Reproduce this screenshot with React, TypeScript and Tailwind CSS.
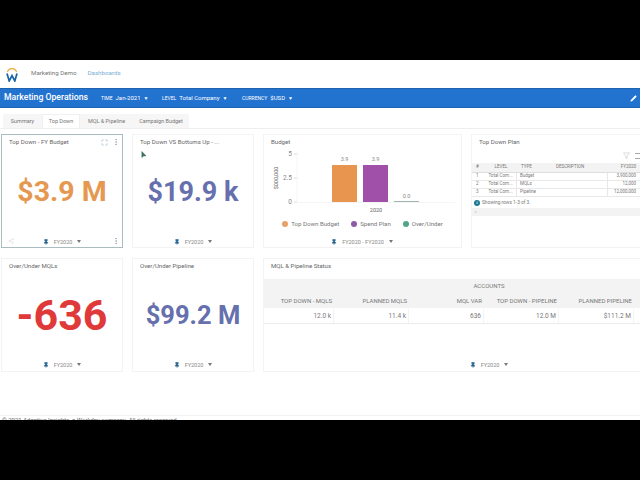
import { EllipsisVertical, Maximize, Pencil, Filter, Pin, Share2 } from "lucide-react";
import type { ReactNode } from "react";

const tabs = ["Summary", "Top Down", "MQL & Pipeline", "Campaign Budget"];

const planRows = [
  ["1", "Total Com...", "Budget", "3,900,000"],
  ["2", "Total Com...", "MQLs", "12,000"],
  ["3", "Total Com...", "Pipeline", "12,000,000"],
];

const statusCols = [
  ["TOP DOWN - MQLS", "12.0 k", "w-[70px]"],
  ["PLANNED MQLS", "11.4 k", "w-[75px]"],
  ["MQL VAR", "636", "w-[75px]"],
  ["TOP DOWN - PIPELINE", "12.0 M", "w-[75px]"],
  ["PLANNED PIPELINE", "$111.2 M", "w-[75px]"],
];

const Caret = () => (
  <span className="inline-block w-0 h-0 border-x-[2.5px] border-x-transparent border-t-[3px] border-t-[#777]" />
);

const PeriodFilter = ({ label = "FY2020" }: { label?: string }) => (
  <div className="flex items-center justify-center gap-[5px] text-[5.5px] text-[#888]">
    <Pin size={6} className="text-[#1f5f8b] fill-[#1f5f8b]" />
    <span>{label}</span>
    <Caret />
  </div>
);

type CardProps = {
  title: string;
  children: ReactNode;
  className?: string;
};

const Card = ({ title, children, className = "border-[#f3f3f3]" }: CardProps) => (
  <div className={`relative flex flex-col border bg-white h-full overflow-hidden ${className}`}>
    <div className="pl-[7px] pt-[2px] text-[6.1px] leading-[9px] text-[#666] whitespace-nowrap">{title}</div>
    {children}
  </div>
);

const Metric = ({ value, color, size }: { value: string; color: string; size: string }) => (
  <div className={`flex-1 flex items-center justify-center font-bold whitespace-nowrap ${color} ${size}`}>
    {value}
  </div>
);

const BudgetChart = () => (
  <svg viewBox="0 0 199 70" className="w-[199px] h-[70px] block">
    <g fontFamily="Roboto, sans-serif" fill="#888">
      <text x="29" y="10" textAnchor="end" fontSize="6.5">5</text>
      <text x="29" y="34" textAnchor="end" fontSize="6.5">2.5</text>
      <text x="29" y="58" textAnchor="end" fontSize="6.5">0</text>
      <line x1="31" x2="34" y1="8" y2="8" stroke="#ccc" strokeWidth="0.7" />
      <line x1="31" x2="34" y1="32" y2="32" stroke="#ccc" strokeWidth="0.7" />
      <line x1="31" x2="34" y1="56" y2="56" stroke="#ccc" strokeWidth="0.7" />
      <line x1="34" x2="34" y1="6" y2="57" stroke="#f0f0f0" strokeWidth="0.7" />
      <line x1="34" x2="192" y1="56.5" y2="56.5" stroke="#f0f0f0" strokeWidth="0.7" />
      <rect x="69" y="19" width="25" height="37" fill="#e8964f" />
      <rect x="100" y="19" width="25" height="37" fill="#a050a8" />
      <rect x="131" y="55" width="25" height="1" fill="#9fb5ad" />
      <text x="81.5" y="15" textAnchor="middle" fontSize="5.5">3.9</text>
      <text x="112.5" y="15" textAnchor="middle" fontSize="5.5">3.9</text>
      <text x="143.5" y="52" textAnchor="middle" fontSize="5.5">0.0</text>
      <text x="113" y="65.5" textAnchor="middle" fontSize="5.5" fill="#666">2020</text>
      <text transform="translate(15 32) rotate(-90)" textAnchor="middle" fontSize="5.5" fill="#666">$000,000</text>
    </g>
  </svg>
);

const LegendItem = ({ color, label }: { color: string; label: string }) => (
  <div className="flex items-center gap-[3px]">
    <span className={`w-[6px] h-[6px] rounded-full ${color}`} />
    <span>{label}</span>
  </div>
);

const TopDownPlan = () => (
  <div className="flex-1 flex flex-col text-[4.5px] text-[#777]">
    <div className="flex justify-end items-start gap-[5px] pt-[6px] h-[17px] text-[#888]">
      <Filter size={7} strokeWidth={1} />
      <div className="w-[5px] h-[6px] mt-[1px] border-y border-[#aaa]" />
    </div>
    <div className="flex h-[10px] items-center bg-[#f3f3f3] border-b border-[#ddd]">
      <span className="w-[13px] pl-[4px]">#</span>
      <span className="w-[32px] text-center">LEVEL</span>
      <span className="w-[39px] pl-[4px]">TYPE</span>
      <span className="w-[48px]">DESCRIPTION</span>
      <span className="flex-1 text-right pr-[4px]">FY2020</span>
    </div>
    {planRows.map((row) => (
      <div key={row[0]} className="flex h-[8px] items-center border-b border-[#e8e8e8]">
        <span className="w-[13px] pl-[4px]">{row[0]}</span>
        <span className="w-[32px] text-center border-r border-[#e8e8e8] whitespace-nowrap overflow-hidden">{row[1]}</span>
        <span className="w-[90px] pl-[3px]">{row[2]}</span>
        <span className="flex-1 text-right pr-[4px] border-l border-[#e8e8e8]">{row[3]}</span>
      </div>
    ))}
    <div className="flex items-center gap-[2px] h-[11px] pl-[2px] text-[4.8px]">
      <span className="flex items-center justify-center w-[6px] h-[6px] rounded-full bg-[#1d7a94] text-white text-[4px] font-bold">i</span>
      <span>Showing rows 1-3 of 3.</span>
    </div>
    <div className="h-[8px] bg-[#f3f3f3] pl-[3px] leading-[8px]">‹</div>
  </div>
);

const StatusTable = () => (
  <div className="flex-1 flex flex-col text-[6px] text-[#777] mt-[9px]">
    <div className="bg-[#f3f3f3] mb-px">
      <div className="h-[13px] flex items-center justify-center pl-[74px]">ACCOUNTS</div>
      <div className="flex h-[16px] items-center">
        {statusCols.map(([head, , w]) => (
          <span key={head} className={`${w} text-right pr-[2px] whitespace-nowrap`}>{head}</span>
        ))}
      </div>
    </div>
    <div className="flex h-[15px] items-center border-b border-[#ececec] text-[6.5px]">
      {statusCols.map(([head, val, w]) => (
        <span key={head} className={`${w} text-right pr-[2px] h-full leading-[14px] border-r border-[#f3f3f3]`}>{val}</span>
      ))}
    </div>
    <div className="flex-1 flex items-end justify-center pb-[2px] pl-[74px]">
      <PeriodFilter />
    </div>
  </div>
);

export default function App() {
  return (
    <div className="w-[640px] h-[480px] overflow-hidden bg-black font-['Roboto',sans-serif] flex flex-col pt-[60px] pb-[60px]">
      <div className="flex-1 bg-white flex flex-col overflow-hidden">
        {/* Top nav */}
        <div className="h-[28px] flex items-center gap-[11px] pl-[6px] text-[6.2px]">
          <svg viewBox="0 0 12 15" className="w-[12px] h-[15px] mt-[1px]">
            <path d="M1.5 5 A4.6 4.2 0 0 1 10.5 5" fill="none" stroke="#e8a93a" strokeWidth="1.3" />
            <path d="M1 6.5 L3.2 14 L6 8.5 L8.8 14 L11 6.5" fill="none" stroke="#1763a8" strokeWidth="1.7" />
          </svg>
          <span className="ml-[2px] text-[#777]">Marketing Demo</span>
          <span className="text-[#7aaed3]">Dashboards</span>
        </div>

        {/* Blue bar */}
        <div className="h-[20px] bg-[#2272cf] border-y border-[#1e62b0] flex items-center text-white pl-[4px] pr-[3px]">
          <span className="text-[8.7px] font-medium w-[97px] whitespace-nowrap">Marketing Operations</span>
          <div className="flex items-baseline gap-[3px] text-[6px] w-[61px] whitespace-nowrap">
            <span className="text-[5px]">TIME</span> Jan-2021 <span className="text-[5px]">▼</span>
          </div>
          <div className="flex items-baseline gap-[3px] text-[6px] w-[80px] whitespace-nowrap">
            <span className="text-[5px]">LEVEL</span> Total Company <span className="text-[5px]">▼</span>
          </div>
          <div className="flex items-baseline gap-[3px] text-[6px] whitespace-nowrap">
            <span className="text-[5px]">CURRENCY</span> $USD <span className="text-[5px]">▼</span>
          </div>
          <Pencil size={7} className="ml-auto fill-white" strokeWidth={0.8} />
        </div>

        {/* Tabs */}
        <div className="mt-[6px] h-[15px] flex items-stretch border-b border-[#eee] pl-[3px] text-[5.5px] text-[#777]">
          {tabs.map((tab, i) => (
            <div
              key={tab}
              className={`flex items-center justify-center ${
                ["w-[39px]", "w-[38px]", "w-[53px]", "w-[56px]"][i]
              } ${i === 1 ? "bg-white border-x border-t border-[#f0f0f0]" : "bg-[#f6f6f6]"}`}
            >
              {tab}
            </div>
          ))}
        </div>

        {/* Dashboard */}
        <div className="mt-[5px] pl-[1px] grid grid-cols-[122px_122px_199px_169px] grid-rows-[114px_114px] gap-x-[9px] gap-y-[10px]">
          <Card title="Top Down - FY Budget" className="border-[#a9bcc0]">
            <div className="absolute right-[2px] top-[3px] flex items-center gap-[4px] text-[#999]">
              <Maximize size={7} className="text-[#8fb0c0]" />
              <EllipsisVertical size={8} />
            </div>
            <Metric value="$3.9 M" color="text-[#e5984f]" size="text-[28.5px]" />
            <div className="pb-[1px]">
              <PeriodFilter />
            </div>
            <Share2 size={6} className="absolute left-[6px] bottom-[3px] text-[#ddd]" />
            <EllipsisVertical size={8} className="absolute right-[2px] bottom-[2px] text-[#999]" />
          </Card>
          <Card title="Top Down VS Bottoms Up - ...">
            <svg viewBox="0 0 7 9" className="absolute left-[8px] top-[16px] w-[6px] h-[8px]">
              <path d="M1 0.5 L1 7.5 L2.8 5.8 L5.8 5.5 Z" fill="#3d7a62" stroke="#1d4a3a" strokeWidth="0.5" />
            </svg>
            <Metric value="$19.9 k" color="text-[#6570ad]" size="text-[27px]" />
            <div className="pb-[1px]">
              <PeriodFilter />
            </div>
          </Card>
          <Card title="Budget">
            <div className="-mx-px">
              <BudgetChart />
            </div>
            <div className="flex items-center justify-center gap-[12px] text-[6.1px] text-[#777] mt-[3px] whitespace-nowrap leading-[9px]">
              <LegendItem color="bg-[#e8a06a]" label="Top Down Budget" />
              <LegendItem color="bg-[#8d5aa8]" label="Spend Plan" />
              <LegendItem color="bg-[#4fa585]" label="Over/Under" />
            </div>
            <div className="mt-auto pb-[1px] pr-[1px]">
              <PeriodFilter label="FY2020 - FY2020" />
            </div>
          </Card>
          <Card title="Top Down Plan" className="border-[#f3f3f3] border-r-0">
            <TopDownPlan />
          </Card>

          <Card title="Over/Under MQLs">
            <Metric value="-636" color="text-[#e0393a]" size="text-[43px]" />
            <div className="pb-[2px]">
              <PeriodFilter />
            </div>
          </Card>
          <Card title="Over/Under Pipeline">
            <Metric value="$99.2 M" color="text-[#6570ad]" size="text-[25.5px]" />
            <div className="pb-[2px]">
              <PeriodFilter />
            </div>
          </Card>
          <div className="col-span-2 h-full">
            <Card title="MQL & Pipeline Status" className="border-[#f3f3f3] border-r-0">
              <StatusTable />
            </Card>
          </div>
        </div>

        {/* Footer, cut by the black band in the picture */}
        <div className="mt-auto h-[5px] border-t border-[#f3f3f3] pl-[2px] text-[6px] leading-[8px] text-[#666] overflow-hidden whitespace-nowrap">
          © 2021 Adaptive Insights, a Workday company. All rights reserved.
        </div>
      </div>
    </div>
  );
}
